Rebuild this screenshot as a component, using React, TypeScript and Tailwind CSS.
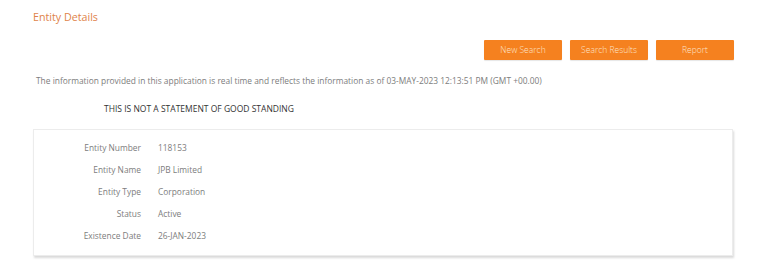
import * as React from 'react';

const rows: [string, string][] = [
  ['Entity Number', '118153'],
  ['Entity Name', 'JPB Limited'],
  ['Entity Type', 'Corporation'],
  ['Status', 'Active'],
  ['Existence Date', '26-JAN-2023'],
];

const buttons = ['New Search', 'Search Results', 'Report'];

export default function App() {
  return (
    <div className="h-[266px] w-[769px] bg-white font-['Open_Sans',sans-serif]">
      <div className="pl-[33px] pt-[8px] text-[10.7px] leading-[18px] text-[#e0834a]">Entity Details</div>
      <div className="flex justify-end gap-[8px] pr-[35px] pt-[14px]">
        {buttons.map((b) => (
          <button
            key={b}
            className="h-[20px] w-[78px] rounded-[1px] bg-[#f5811f] text-[8.5px] font-light text-[#fde4cc] shadow-[0_1px_1px_rgba(0,0,0,0.1)]"
          >
            {b}
          </button>
        ))}
      </div>
      <div className="pl-[36px] pt-[15px] text-[8.4px] leading-[12px] text-[#7d7d7d]">
        The information provided in this application is real time and reflects the information as of 03-MAY-2023 12:13:51 PM (GMT +00.00)
      </div>
      <div className="pl-[104px] pt-[16px] text-[8.5px] leading-[12px] text-[#333]">
        THIS IS NOT A STATEMENT OF GOOD STANDING
      </div>
      <div className="ml-[33px] mt-[14px] w-[700px] border border-[#ececec] pt-[7px] pb-[8px] shadow-[1px_2px_2px_rgba(0,0,0,0.15)]">
        {rows.map(([k, v]) => (
          <div key={k} className="flex h-[22px] items-center text-[8.4px] text-[#7d7d7d]">
            <div className="w-[107px] text-right">{k}</div>
            <div className="pl-[17px]">{v}</div>
          </div>
        ))}
      </div>
    </div>
  );
}
